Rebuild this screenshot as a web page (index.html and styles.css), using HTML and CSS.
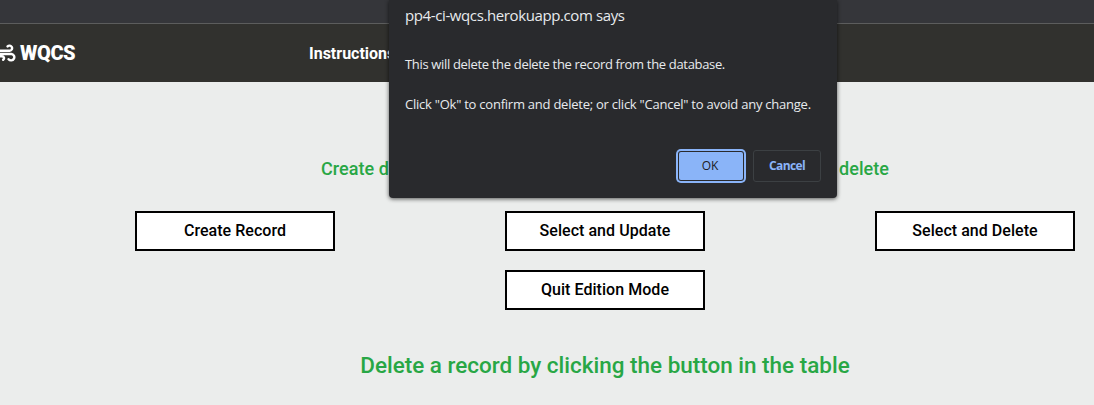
FILE: index.html
```
<!DOCTYPE html>
<html lang="en">
<head>
<meta charset="utf-8">
<title>WQCS</title>
<link rel="stylesheet" href="styles.css">
</head>
<body>
<div class="toolbar"></div>
<header class="navbar">
  <div class="brand">
    <svg class="wind" viewBox="0 0 16 18" width="16" height="18" fill="none" stroke="#fff" stroke-width="2.4" stroke-linecap="round">
      <path d="M-2 6.8H9.7A2.6 2.6 0 1 0 7.6 2.4"/>
      <path d="M-2 10H11.3A3.2 3.2 0 1 1 8.6 15.2"/>
      <path d="M-2 12.2H1.8A2 2 0 0 1 3.2 15.8"/>
    </svg>
    <span class="brand-name">WQCS</span>
  </div>
  <a class="nav-link">Instructions</a>
</header>
<main class="page">
  <p class="intro"><span>Create d</span><span>delete</span></p>
  <div class="actions">
    <button class="action">Create Record</button>
    <button class="action">Select and Update</button>
    <button class="action delete">Select and Delete</button>
    <button class="action quit">Quit Edition Mode</button>
  </div>
  <h2 class="hint"><span>Delete a record by clicking the button in the table</span></h2>
</main>
<div class="dialog">
  <div class="origin"><span>pp4-ci-wqcs.herokuapp.com says</span></div>
  <div class="message first"><span>This will delete the delete the record from the database.</span></div>
  <div class="message second"><span>Click "Ok" to confirm and delete; or click "Cancel" to avoid any change.</span></div>
  <div class="dialog-buttons">
    <button class="ok">OK</button>
    <button class="cancel">Cancel</button>
  </div>
</div>
</body>
</html>
```
FILE: styles.css
```
* { box-sizing: border-box; }
body { margin: 0; height: 405px; overflow: hidden; background: #ebedec; font-family: Roboto, sans-serif; }
button { font: inherit; margin: 0; padding: 0; }
.toolbar { height: 24px; background: #35363a; border-bottom: 1px solid #5c5d5d; }
.navbar { height: 58px; background: #31312e; color: #fff; display: flex; align-items: center; }
.brand { width: 309px; display: flex; align-items: center; gap: 4px; }
.wind { display: block; }
.brand-name { font-size: 20px; font-weight: 900; letter-spacing: -0.4px; line-height: 24px; }
.nav-link { padding-top: 2px; font-size: 16px; font-weight: 700; line-height: 20px; }
.page { color: #28a745; }
.intro { margin: 76px auto 0 321px; width: 568px; display: flex; justify-content: space-between; font-size: 18px; font-weight: 500; line-height: 22px; letter-spacing: 0.05px; }
.actions { margin: 31px 0 0 135px; display: grid; grid-template-columns: repeat(3, 200px); column-gap: 170px; row-gap: 19px; }
.action { height: 40px; padding-bottom: 2px; border: 2px solid #000; border-radius: 0; background: #fff; color: #000; font-size: 16px; font-weight: 500; letter-spacing: 0.04px; }
.quit { grid-column: 2; }
.hint { margin: 41px 0 0 116px; width: 978px; text-align: center; font-size: 22.47px; font-weight: 500; line-height: 28px; }
.dialog { position: absolute; left: 389px; top: 0; width: 448px; height: 198px; padding: 5px 16px 0; background: #292a2d; border-radius: 0 0 4px 4px; box-shadow: 0 1px 4px rgba(0,0,0,.65); color: #e8eaed; font-family: "Open Sans", sans-serif; }
.origin { font-size: 15px; line-height: 20px; white-space: nowrap; letter-spacing: -0.39px; }
.message { font-size: 13px; line-height: 20px; white-space: nowrap; }
.first { margin-top: 29px; letter-spacing: -0.33px; }
.second { margin-top: 20px; letter-spacing: -0.24px; }
.dialog-buttons { margin-top: 36px; display: flex; justify-content: flex-end; align-items: center; gap: 10px; }
.dialog-buttons button { border-radius: 3px; font-size: 12px; }
.dialog-buttons .ok { width: 64px; height: 28px; padding: 0 2px 2px 0; border: 0; border-radius: 2px; background: #8ab4f8; color: #202124; box-shadow: 0 0 0 1px #292a2d, 0 0 0 3px #8ab4f8; }
.dialog-buttons .cancel { width: 68px; height: 32px; padding-bottom: 2px; background: transparent; border: 1px solid #3c4043; color: #8ab4f8; font-weight: 700; letter-spacing: -0.6px; }
```
